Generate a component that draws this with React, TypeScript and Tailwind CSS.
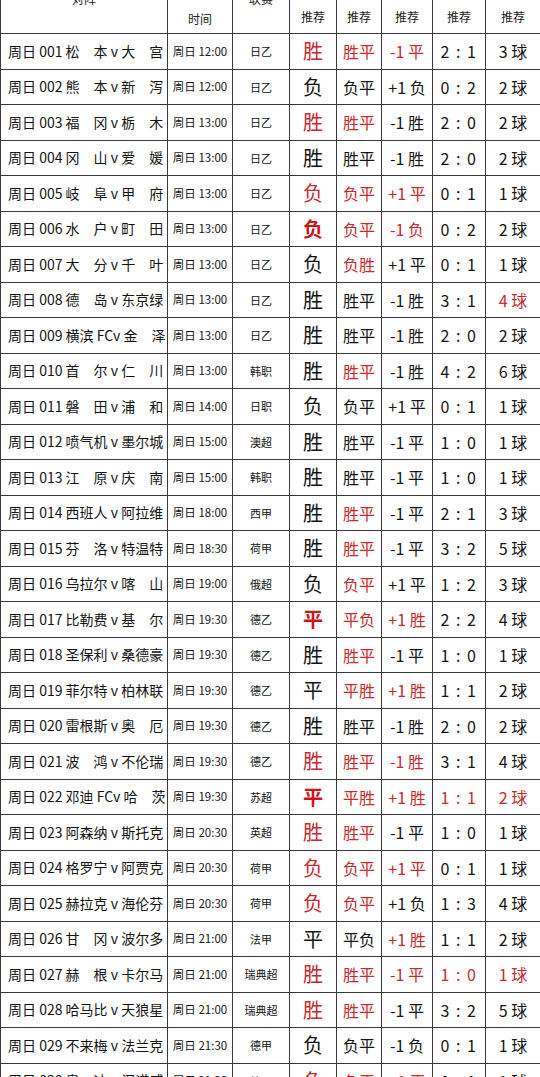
import React from "react"

type Cell = [string, string]

// r = red, R = red bold, "" = black
const rows: [string, string, string, Cell, Cell, Cell, Cell, Cell][] = [
  ["周日 001 松　本 v 大　宫", "周日 12:00", "日乙", ["胜", "r"], ["胜平", "r"], ["-1 平", "r"], ["2 : 1", ""], ["3 球", ""]],
  ["周日 002 熊　本 v 新　泻", "周日 12:00", "日乙", ["负", ""], ["负平", ""], ["+1 负", ""], ["0 : 2", ""], ["2 球", ""]],
  ["周日 003 福　冈 v 栃　木", "周日 13:00", "日乙", ["胜", "r"], ["胜平", "r"], ["-1 胜", ""], ["2 : 0", ""], ["2 球", ""]],
  ["周日 004 冈　山 v 爱　媛", "周日 13:00", "日乙", ["胜", ""], ["胜平", ""], ["-1 胜", ""], ["2 : 0", ""], ["2 球", ""]],
  ["周日 005 岐　阜 v 甲　府", "周日 13:00", "日乙", ["负", "r"], ["负平", "r"], ["+1 平", "r"], ["0 : 1", ""], ["1 球", ""]],
  ["周日 006 水　户 v 町　田", "周日 13:00", "日乙", ["负", "R"], ["负平", "r"], ["-1 负", "r"], ["0 : 2", ""], ["2 球", ""]],
  ["周日 007 大　分 v 千　叶", "周日 13:00", "日乙", ["负", ""], ["负胜", "r"], ["+1 平", ""], ["0 : 1", ""], ["1 球", ""]],
  ["周日 008 德　岛 v 东京绿", "周日 13:00", "日乙", ["胜", ""], ["胜平", ""], ["-1 胜", ""], ["3 : 1", ""], ["4 球", "r"]],
  ["周日 009 横滨 FCv 金　泽", "周日 13:00", "日乙", ["胜", ""], ["胜平", ""], ["-1 胜", ""], ["2 : 0", ""], ["2 球", ""]],
  ["周日 010 首　尔 v 仁　川", "周日 13:00", "韩职", ["胜", ""], ["胜平", "r"], ["-1 胜", ""], ["4 : 2", ""], ["6 球", ""]],
  ["周日 011 磐　田 v 浦　和", "周日 14:00", "日职", ["负", ""], ["负平", ""], ["+1 平", ""], ["0 : 1", ""], ["1 球", ""]],
  ["周日 012 喷气机 v 墨尔城", "周日 15:00", "澳超", ["胜", ""], ["胜平", ""], ["-1 平", ""], ["1 : 0", ""], ["1 球", ""]],
  ["周日 013 江　原 v 庆　南", "周日 15:00", "韩职", ["胜", ""], ["胜平", ""], ["-1 平", ""], ["1 : 0", ""], ["1 球", ""]],
  ["周日 014 西班人 v 阿拉维", "周日 18:00", "西甲", ["胜", ""], ["胜平", "r"], ["-1 平", ""], ["2 : 1", ""], ["3 球", ""]],
  ["周日 015 芬　洛 v 特温特", "周日 18:30", "荷甲", ["胜", ""], ["胜平", "r"], ["-1 平", ""], ["3 : 2", ""], ["5 球", ""]],
  ["周日 016 乌拉尔 v 喀　山", "周日 19:00", "俄超", ["负", ""], ["负平", "r"], ["+1 平", ""], ["1 : 2", ""], ["3 球", ""]],
  ["周日 017 比勒费 v 基　尔", "周日 19:30", "德乙", ["平", "R"], ["平负", "r"], ["+1 胜", "r"], ["2 : 2", ""], ["4 球", ""]],
  ["周日 018 圣保利 v 桑德豪", "周日 19:30", "德乙", ["胜", ""], ["胜平", "r"], ["-1 平", ""], ["1 : 0", ""], ["1 球", ""]],
  ["周日 019 菲尔特 v 柏林联", "周日 19:30", "德乙", ["平", ""], ["平胜", "r"], ["+1 胜", "r"], ["1 : 1", ""], ["2 球", ""]],
  ["周日 020 雷根斯 v 奥　厄", "周日 19:30", "德乙", ["胜", ""], ["胜平", ""], ["-1 胜", ""], ["2 : 0", ""], ["2 球", ""]],
  ["周日 021 波　鸿 v 不伦瑞", "周日 19:30", "德乙", ["胜", "r"], ["胜平", "r"], ["-1 胜", "r"], ["3 : 1", ""], ["4 球", ""]],
  ["周日 022 邓迪 FCv 哈　茨", "周日 19:30", "苏超", ["平", "R"], ["平胜", "r"], ["+1 胜", "r"], ["1 : 1", "r"], ["2 球", "r"]],
  ["周日 023 阿森纳 v 斯托克", "周日 20:30", "英超", ["胜", "r"], ["胜平", "r"], ["-1 平", ""], ["1 : 0", ""], ["1 球", ""]],
  ["周日 024 格罗宁 v 阿贾克", "周日 20:30", "荷甲", ["负", "r"], ["负平", "r"], ["+1 平", "r"], ["0 : 1", ""], ["1 球", ""]],
  ["周日 025 赫拉克 v 海伦芬", "周日 20:30", "荷甲", ["负", "r"], ["负平", "r"], ["+1 负", ""], ["1 : 3", ""], ["4 球", ""]],
  ["周日 026 甘　冈 v 波尔多", "周日 21:00", "法甲", ["平", ""], ["平负", ""], ["+1 胜", "r"], ["1 : 1", ""], ["2 球", ""]],
  ["周日 027 赫　根 v 卡尔马", "周日 21:00", "瑞典超", ["胜", "r"], ["胜平", "r"], ["-1 平", "r"], ["1 : 0", "r"], ["1 球", "r"]],
  ["周日 028 哈马比 v 天狼星", "周日 21:00", "瑞典超", ["胜", "r"], ["胜平", "r"], ["-1 平", ""], ["3 : 2", ""], ["5 球", ""]],
  ["周日 029 不来梅 v 法兰克", "周日 21:30", "德甲", ["负", ""], ["负平", ""], ["-1 负", ""], ["0 : 1", ""], ["1 球", ""]],
  ["周日 030 奥　迪 v 汉诺威", "周日 21:30", "德甲", ["负", "r"], ["负平", "r"], ["+1 平", "r"], ["0 : 1", ""], ["1 球", ""]],
]

const cell = "flex items-center justify-center border-r border-b border-[#3a3a3a]"

function tone(s: string) {
  if (s === "R") return "text-[#d0141c] font-bold"
  if (s === "r") return "text-[#c8282e]"
  return "text-[#141414]"
}

export default function App() {
  return (
    <div
      className="h-[1077px] w-[540px] overflow-hidden bg-white"
      style={{ fontFamily: '"Noto Sans CJK SC", "Noto Sans", sans-serif' }}
    >
      <div className="grid grid-cols-[167px_65px_57px_47px_45px_51px_53px_55px] border-l border-[#3a3a3a]">
        {/* header */}
        <div className={`${cell} h-[34px] items-start`}>
          <span className="-mt-[10px] text-[12px] text-[#222]">对阵</span>
        </div>
        <div className={`${cell} h-[34px] pt-[4px]`}>
          <span className="text-[12px] text-[#222]">时间</span>
        </div>
        <div className={`${cell} h-[34px] items-start`}>
          <span className="-mt-[10px] text-[12px] text-[#222]">联赛</span>
        </div>
        {["推荐", "推荐", "推荐", "推荐", "推荐"].map((t, i) => (
          <div key={i} className={`${cell} h-[34px]`}>
            <span className="text-[12px] text-[#222]">{t}</span>
          </div>
        ))}

        {rows.map((r, i) => (
          <React.Fragment key={i}>
            <div className={`${cell} h-[35.5px] justify-start pl-[7px]`}>
              <span className="whitespace-pre text-[14px] text-[#141414]">{r[0]}</span>
            </div>
            <div className={`${cell} h-[35.5px]`}>
              <span className="whitespace-pre text-[11.5px] text-[#141414]">{r[1]}</span>
            </div>
            <div className={`${cell} h-[35.5px]`}>
              <span className="text-[11px] text-[#141414]">{r[2]}</span>
            </div>
            <div className={`${cell} h-[35.5px]`}>
              <span className={`text-[20px] ${tone(r[3][1])}`}>{r[3][0]}</span>
            </div>
            <div className={`${cell} h-[35.5px]`}>
              <span className={`whitespace-pre text-[16px] ${tone(r[4][1])}`}>{r[4][0]}</span>
            </div>
            <div className={`${cell} h-[35.5px]`}>
              <span className={`whitespace-pre text-[16px] ${tone(r[5][1])}`}>{r[5][0]}</span>
            </div>
            <div className={`${cell} h-[35.5px]`}>
              <span className={`whitespace-pre text-[16px] tracking-[1.5px] ${tone(r[6][1])}`}>{r[6][0]}</span>
            </div>
            <div className={`${cell} h-[35.5px]`}>
              <span className={`whitespace-pre text-[16px] ${tone(r[7][1])}`}>{r[7][0]}</span>
            </div>
          </React.Fragment>
        ))}
      </div>
    </div>
  )
}
